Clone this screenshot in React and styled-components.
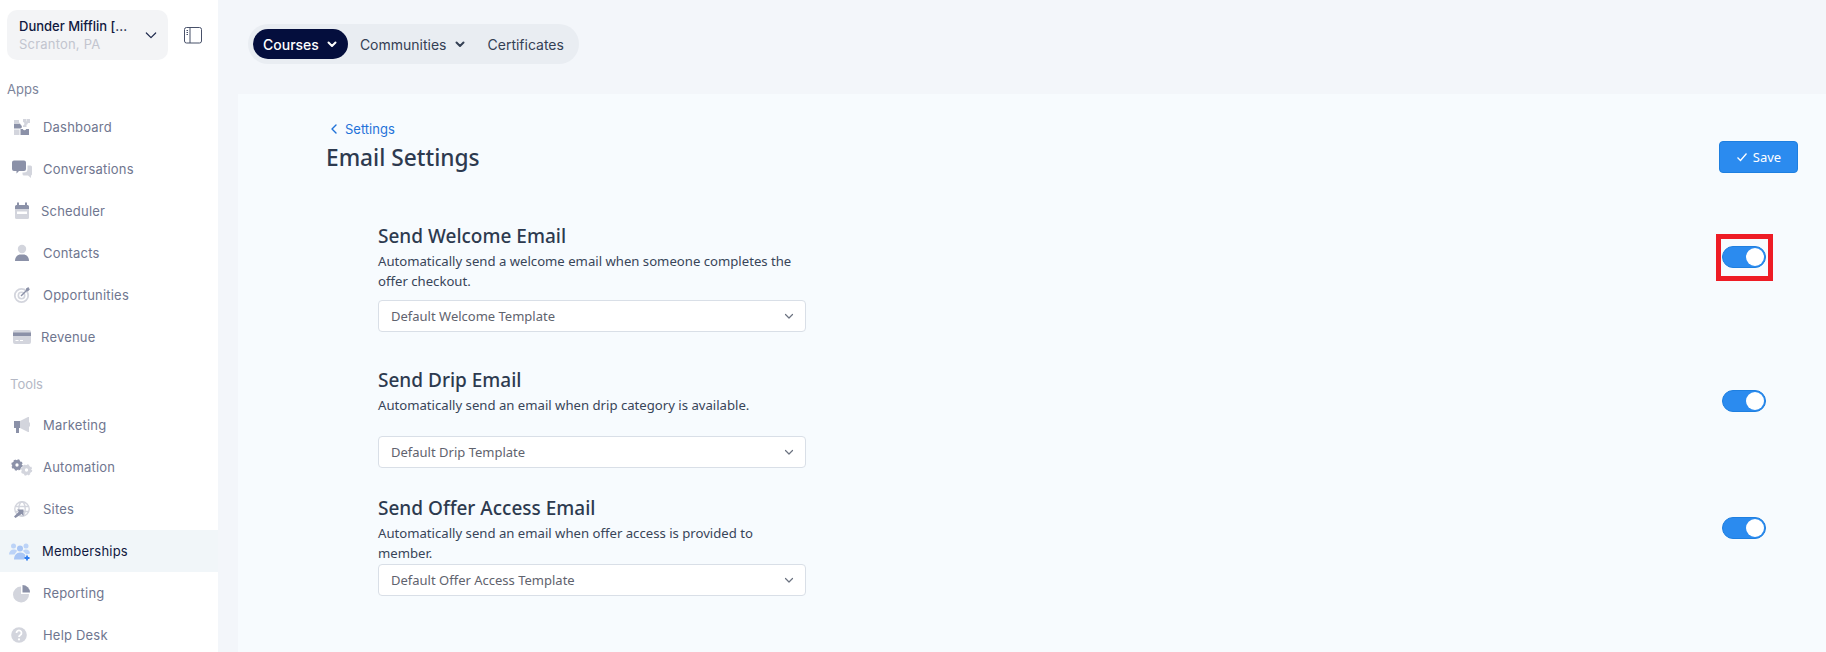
import React from "react";
import styled, { createGlobalStyle } from "styled-components";

const GlobalStyle = createGlobalStyle`
  html, body {
    margin: 0;
    padding: 0;
    height: 652px;
    overflow: hidden;
    background: #f3f6fa;
    font-family: Inter, "Liberation Sans", sans-serif;
  }
`;

const DARK = "#8b91a8";
const LIGHT = "#d3d5dd";

// ======= Sidebar =======
const Page = styled.div`
  display: flex;
  width: 1826px;
  height: 652px;
  overflow: hidden;
`;

const Sidebar = styled.aside`
  width: 218px;
  flex: none;
  background: #fff;
  padding-top: 10px;
  box-sizing: border-box;
`;

const OrgRow = styled.div`
  display: flex;
  align-items: center;
  padding-left: 7px;
`;

const OrgBox = styled.div`
  width: 161px;
  height: 50px;
  box-sizing: border-box;
  background: #f3f4f6;
  border-radius: 10px;
  padding: 0 9px 0 12px;
  display: flex;
  align-items: center;
  justify-content: space-between;
`;

const OrgName = styled.div`
  font-size: 13px;
  line-height: 18px;
  font-weight: 500;
  color: #101840;
  white-space: nowrap;
`;

const OrgPlace = styled.div`
  font-size: 13px;
  line-height: 18px;
  letter-spacing: 0.2px;
  color: #c2c5cf;
`;

const CollapseButton = styled.div`
  margin-left: 16px;
  display: flex;
`;

const SectionLabel = styled.div`
  font-size: 13px;
  line-height: 18px;
  color: ${(p) => (p.$muted ? "#b4b8c5" : "#7d849b")};
  padding-left: ${(p) => (p.$muted ? 10 : 7)}px;
  margin-top: ${(p) => p.$top}px;
  margin-bottom: ${(p) => p.$bottom}px;
`;

const NavItem = styled.div`
  height: 42px;
  display: flex;
  align-items: center;
  background: ${(p) => (p.$active ? "#f1f6f9" : "transparent")};
  color: ${(p) => (p.$active ? "#101840" : "#6f768f")};
  font-size: 13px;
  letter-spacing: 0.2px;
`;

const NavIcon = styled.span`
  width: 24px;
  height: 24px;
  margin-left: 10px;
  margin-right: ${(p) => p.$gap}px;
  flex: none;
  display: flex;

  svg {
    overflow: visible;
  }
`;

// ======= Main =======
const Main = styled.main`
  flex: 1;
  min-width: 0;
  display: flex;
  flex-direction: column;
`;

const TopBar = styled.div`
  height: 94px;
  flex: none;
  padding: 24px 0 0 30px;
  box-sizing: border-box;
`;

const TabGroup = styled.nav`
  display: inline-flex;
  align-items: center;
  height: 40px;
  box-sizing: border-box;
  padding: 0 5px;
  background: #e9edf2;
  border-radius: 20px;
  gap: 2px;
`;

const Tab = styled.div`
  height: 30px;
  box-sizing: border-box;
  display: flex;
  align-items: center;
  gap: 7px;
  padding: 0 10px;
  border-radius: 15px;
  font-size: 14px;
  font-weight: ${(p) => (p.$active ? 500 : 400)};
  color: ${(p) => (p.$active ? "#fff" : "#344054")};
  background: ${(p) => (p.$active ? "#040e3d" : "transparent")};
`;

const Panel = styled.section`
  flex: 1;
  margin-left: 20px;
  background: #f7fbfe;
  padding: 26px 28px 0 88px;
  color: #2d3a4f;
`;

const Crumb = styled.div`
  display: flex;
  align-items: center;
  gap: 6px;
  padding-left: 3px;
  font-size: 13px;
  line-height: 18px;
  color: #1f72d9;
`;

const TitleBar = styled.div`
  display: flex;
  align-items: flex-start;
  justify-content: space-between;
  margin-top: 5px;
`;

const Title = styled.h1`
  margin: 0;
  font-family: "Noto Sans", sans-serif;
  font-size: 22.7px;
  line-height: 30px;
  font-weight: 500;
  color: #2d3a4f;
`;

const SaveButton = styled.button`
  width: 79px;
  height: 32px;
  margin-top: -2px;
  border: 1px solid #1e7fe0;
  border-radius: 4px;
  background: #2b8bef;
  color: #fff;
  font-family: "Noto Sans", sans-serif;
  font-size: 13px;
  font-weight: 400;
  display: flex;
  align-items: center;
  justify-content: center;
  gap: 5px;
  padding: 0;
`;

const SettingRow = styled.div`
  display: flex;
  justify-content: space-between;
  align-items: flex-start;
  margin-left: 52px;
  margin-top: ${(p) => p.$top}px;
`;

const SettingText = styled.div`
  width: 428px;
`;

const SettingTitle = styled.h2`
  margin: 0;
  font-family: "Noto Sans", sans-serif;
  font-size: 19px;
  line-height: 26px;
  font-weight: 500;
  color: #2d3a4f;
`;

const SettingDesc = styled.p`
  margin: 2px 0 0;
  font-family: "Noto Sans", sans-serif;
  font-size: 13.15px;
  line-height: 20px;
  color: #384559;
  min-height: ${(p) => p.$min}px;
`;

const SelectBox = styled.div`
  height: 32px;
  margin-top: ${(p) => p.$top}px;
  box-sizing: border-box;
  background: #fff;
  border: 1px solid #d9dfe7;
  border-radius: 4px;
  padding: 0 10px 0 12px;
  display: flex;
  align-items: center;
  justify-content: space-between;
  font-family: "Noto Sans", sans-serif;
  font-size: 13px;
  color: #5f636e;
`;

const ToggleSlot = styled.div`
  position: relative;
  margin: ${(p) => p.$top}px 32px 0 0;
`;

const Toggle = styled.div`
  width: 44px;
  height: 22px;
  box-sizing: border-box;
  border-radius: 11px;
  background: #2b8bef;
  border: 1px solid #1e7fe0;
  display: flex;
  justify-content: flex-end;
  align-items: center;
  padding-right: 1px;
`;

const Knob = styled.span`
  width: 18px;
  height: 18px;
  border-radius: 50%;
  background: #fff;
`;

const Highlight = styled.div`
  position: absolute;
  left: -6px;
  top: -12px;
  width: 57px;
  height: 47px;
  box-sizing: border-box;
  border: 5px solid #ee1c25;
`;

const Chevron = ({ size = 12, color = "#6b7280", width = 1.5 }) => (
  <svg width={size} height={size} viewBox="0 0 12 12" fill="none">
    <path d="M2.500 4.500 6 8l3.500-3.500" stroke={color} strokeWidth={width} strokeLinecap="round" strokeLinejoin="round" />
  </svg>
);

const Icon = ({ children }) => (
  <svg width="24" height="24" viewBox="0 0 24 24">{children}</svg>
);

const icons = {
  dashboard: (
    <Icon>
      <path fill={LIGHT} d="M4 5h5v2.500a1.800 1.800 0 0 1 0 3.500H4z" />
      <path fill={DARK} d="M6 9h4.500v1a1.800 1.800 0 0 1 0 3.500H4V9z" />
      <path fill={LIGHT} d="M13 4h3.500v2.200a1.800 1.800 0 0 1 0 3.500V12H13v-1.500a1.800 1.800 0 0 0 0-3.500z" />
      <path fill={LIGHT} d="M4 14.500h5.500V20H4z" />
      <path fill={DARK} d="M10.500 14h2.300a1.800 1.800 0 0 0 3.400 0H19v6h-8.500z" />
      <path fill={LIGHT} d="M17 4h3v4h-3z" />
    </Icon>
  ),
  conversations: (
    <Icon>
      <path fill={DARK} d="M4 3.500h10a2 2 0 0 1 2 2V12a2 2 0 0 1-2 2H9l-2.500 2.500V14H4a2 2 0 0 1-2-2V5.500a2 2 0 0 1 2-2z" />
      <path fill={LIGHT} d="M17.500 8.500H20.500a1.500 1.500 0 0 1 1.500 1.500v7a1.500 1.500 0 0 1-1 1.500V21l-3-2.500h-4a1.500 1.500 0 0 1-1.500-1.500v-1.500H14a3.500 3.500 0 0 0 3.500-3.500z" />
    </Icon>
  ),
  scheduler: (
    <Icon>
      <path fill={DARK} d="M7 3.500h2V6h6V3.500h2V6h.500A1.500 1.500 0 0 1 19 7.500V10H5V7.500A1.500 1.500 0 0 1 6.500 6H7z" />
      <path fill={LIGHT} d="M5 10h14v8.500a1.500 1.500 0 0 1-1.500 1.500h-11A1.500 1.500 0 0 1 5 18.500z" />
      <rect x="7" y="12.500" width="10" height="2.500" fill="#fff" />
    </Icon>
  ),
  contacts: (
    <Icon>
      <circle cx="12" cy="8" r="4.200" fill={LIGHT} />
      <path fill={DARK} d="M5 20c0-4 2.500-6.500 5.500-6.500h3c3 0 5.500 2.500 5.500 6.500z" />
    </Icon>
  ),
  opportunities: (
    <Icon>
      <circle cx="11.500" cy="12.500" r="6.700" fill="none" stroke={LIGHT} strokeWidth="1.800" />
      <circle cx="11.500" cy="12.500" r="3.200" fill="none" stroke={LIGHT} strokeWidth="1.600" />
      <path d="M11 13 17 7" stroke={DARK} strokeWidth="1.500" />
      <path fill={DARK} d="m16 5.500 2.500-1.500.5 1.500 1 .5L18 8.500l-2-.5z" />
    </Icon>
  ),
  revenue: (
    <Icon>
      <rect x="3" y="5" width="18" height="14" rx="2" fill={LIGHT} />
      <rect x="3" y="7.500" width="18" height="3.500" fill={DARK} />
      <path stroke="#fff" strokeWidth="1" d="M5.500 15.500h3M10 15.500h3" />
    </Icon>
  ),
  marketing: (
    <Icon>
      <path fill={DARK} d="M4 8h6v7H9v5H6v-5H4z" />
      <path fill={LIGHT} d="M10 8l8-4h1v15h-1l-8-4z" />
      <path fill={LIGHT} d="M19 9.500h1v4h-1z" />
    </Icon>
  ),
  automation: (
    <Icon>
      <circle cx="7" cy="10" r="3.300" fill="none" stroke={DARK} strokeWidth="3.300" />
      <circle cx="7" cy="10" r="4.800" fill="none" stroke={DARK} strokeWidth="1.800" strokeDasharray="2 1.770" />
      <circle cx="16.500" cy="15" r="3.300" fill="none" stroke={LIGHT} strokeWidth="3.300" />
      <circle cx="16.500" cy="15" r="4.800" fill="none" stroke={LIGHT} strokeWidth="1.800" strokeDasharray="2 1.770" />
    </Icon>
  ),
  sites: (
    <Icon>
      <circle cx="12" cy="12" r="7.200" fill="none" stroke={LIGHT} strokeWidth="1.400" />
      <ellipse cx="12" cy="12" rx="3.200" ry="7.200" fill="none" stroke={LIGHT} strokeWidth="1.400" />
      <path stroke={LIGHT} strokeWidth="1.400" d="M5 9.500h14M5 14.500h14" />
      <path fill={DARK} d="M5.500 21 4 19.500l5-5-2-2h6.500V19l-2-2z" />
    </Icon>
  ),
  memberships: (
    <Icon>
      <circle cx="3.500" cy="7" r="2.500" fill="#bcd3f7" />
      <circle cx="16" cy="7" r="2.500" fill="#bcd3f7" />
      <circle cx="10" cy="9.500" r="3" fill="#a9c6f5" />
      <path fill="#bcd3f7" d="M-1 15.500c0-3 2-5 4.500-5S6.500 11 7 12l-2.500 3.500z" />
      <path fill="#bcd3f7" d="M13 12c.7-1 1.500-1.500 3-1.500 2.500 0 4 2 4 4l-3.500 1z" />
      <path fill="#a9c6f5" d="M4 20.500c0-4 2.500-7 6-7s5 1.500 5.500 3.500L14 20.500z" />
      <path stroke="#2f7cf0" strokeWidth="1.800" d="M17 16.500v5M14.500 19h5" />
    </Icon>
  ),
  reporting: (
    <Icon>
      <path fill={LIGHT} d="M11 5.500V13h8a8 8 0 1 1-8-7.500z" />
      <path fill={DARK} d="M12.500 4A7.500 7.500 0 0 1 20 11.500h-7.500z" />
    </Icon>
  ),
  help: (
    <Icon>
      <circle cx="9" cy="12" r="7.800" fill={LIGHT} />
      <path d="M6.500 10a2.500 2.500 0 1 1 3.800 2.100c-.9.500-1.300 1-1.300 2" fill="none" stroke="#fff" strokeWidth="1.800" />
      <circle cx="9" cy="16.400" r="1.100" fill="#fff" />
    </Icon>
  ),
};

const appsNav = [
  ["dashboard", "Dashboard", 9],
  ["conversations", "Conversations", 9],
  ["scheduler", "Scheduler", 7],
  ["contacts", "Contacts", 9],
  ["opportunities", "Opportunities", 9],
  ["revenue", "Revenue", 7],
];

const toolsNav = [
  ["marketing", "Marketing", 9],
  ["automation", "Automation", 9],
  ["sites", "Sites", 9],
  ["memberships", "Memberships", 8, true],
  ["reporting", "Reporting", 9],
  ["help", "Help Desk", 9],
];

const renderNav = ([key, label, gap, active]) => (
  <NavItem key={key} $active={active}>
    <NavIcon $gap={gap}>{icons[key]}</NavIcon>
    {label}
  </NavItem>
);

const settings = [
  {
    title: "Send Welcome Email",
    desc: "Automatically send a welcome email when someone completes the offer checkout.",
    template: "Default Welcome Template",
    top: 50,
    descMin: 40,
    selectTop: 9,
    toggleTop: 23,
    highlight: true,
  },
  {
    title: "Send Drip Email",
    desc: "Automatically send an email when drip category is available.",
    template: "Default Drip Template",
    top: 35,
    descMin: 20,
    selectTop: 21,
    toggleTop: 23,
  },
  {
    title: "Send Offer Access Email",
    desc: "Automatically send an email when offer access is provided to member.",
    template: "Default Offer Access Template",
    top: 27,
    descMin: 40,
    selectTop: 1,
    toggleTop: 22,
  },
];

const App = () => (
  <Page>
    <GlobalStyle />
    <Sidebar>
      <OrgRow>
        <OrgBox>
          <div>
            <OrgName>Dunder Mifflin [...</OrgName>
            <OrgPlace>Scranton, PA</OrgPlace>
          </div>
          <Chevron size={16} color="#1f2a4d" width={0.9} />
        </OrgBox>
        <CollapseButton>
          <svg width="18" height="17" viewBox="0 0 18 17" fill="none" stroke="#475069" strokeWidth="1">
            <rect x="0.500" y="0.500" width="17" height="15.500" rx="2" />
            <path d="M6 .5v15.500M2.500 3.500h1.500M2.500 5.500h1.500M2.500 7.500h1.500" />
          </svg>
        </CollapseButton>
      </OrgRow>
      <SectionLabel $top={20} $bottom={8}>Apps</SectionLabel>
      {appsNav.map(renderNav)}
      <SectionLabel $muted $top={17} $bottom={11}>Tools</SectionLabel>
      {toolsNav.map(renderNav)}
    </Sidebar>
    <Main>
      <TopBar>
        <TabGroup>
          <Tab $active>
            Courses
            <Chevron size={12} color="#fff" width={2} />
          </Tab>
          <Tab>
            Communities
            <Chevron size={12} color="#344054" width={2} />
          </Tab>
          <Tab>Certificates</Tab>
        </TabGroup>
      </TopBar>
      <Panel>
        <Crumb>
          <svg width="10" height="12" viewBox="0 0 10 12" fill="none">
            <path d="M7 2 3 6l4 4" stroke="#1f72d9" strokeWidth="1.400" strokeLinecap="round" strokeLinejoin="round" />
          </svg>
          Settings
        </Crumb>
        <TitleBar>
          <Title>Email Settings</Title>
          <SaveButton>
            <svg width="12" height="12" viewBox="0 0 12 12" fill="none">
              <path d="m1.500 6.500 3 3 6-7" stroke="#fff" strokeWidth="1.300" />
            </svg>
            Save
          </SaveButton>
        </TitleBar>
        {settings.map((s) => (
          <SettingRow key={s.title} $top={s.top}>
            <SettingText>
              <SettingTitle>{s.title}</SettingTitle>
              <SettingDesc $min={s.descMin}>{s.desc}</SettingDesc>
              <SelectBox $top={s.selectTop}>
                {s.template}
                <Chevron size={12} color="#6b7280" width={1.2} />
              </SelectBox>
            </SettingText>
            <ToggleSlot $top={s.toggleTop}>
              <Toggle>
                <Knob />
              </Toggle>
              {s.highlight && <Highlight />}
            </ToggleSlot>
          </SettingRow>
        ))}
      </Panel>
    </Main>
  </Page>
);

export default App;
